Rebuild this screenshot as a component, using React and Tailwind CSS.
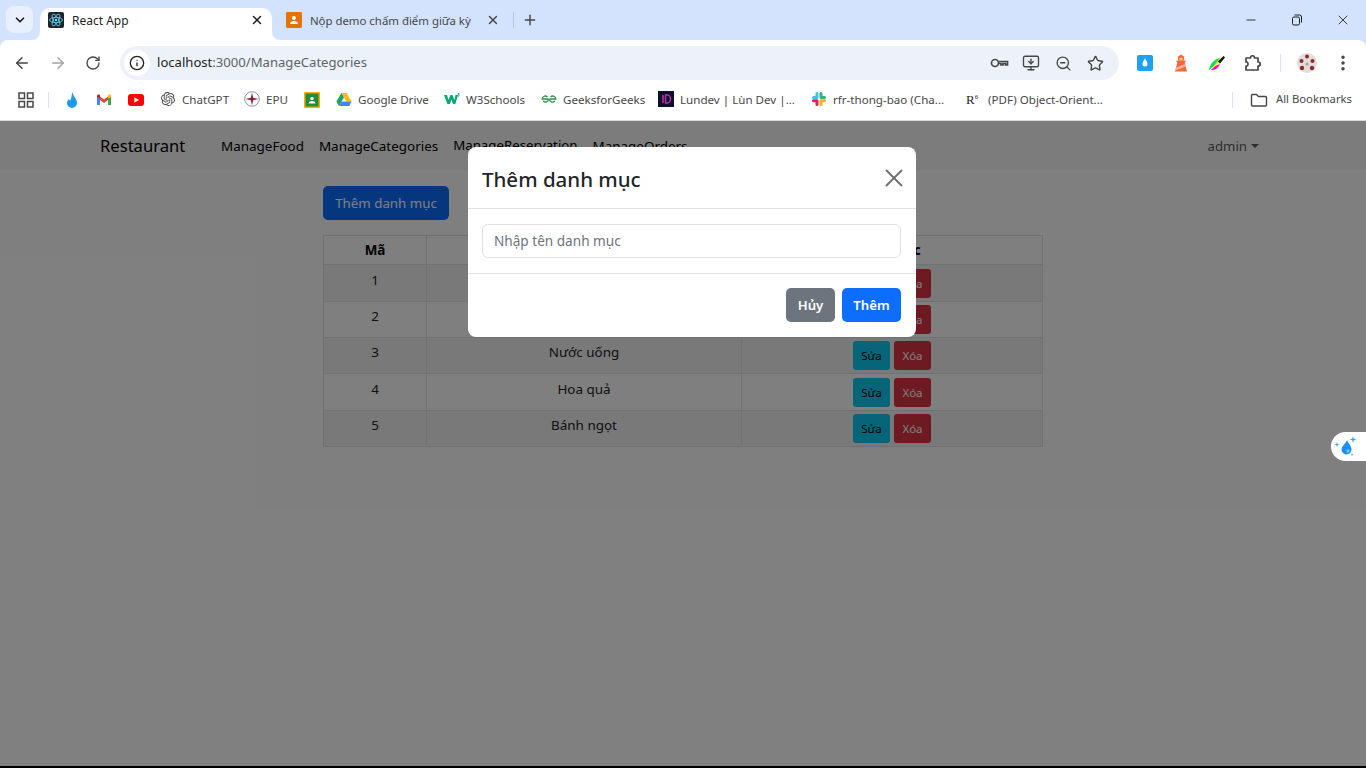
import React from 'react';
import { ArrowLeft, ArrowRight, ChevronDown, Info, Minus, MonitorDown, MoreVertical, Plus, RotateCw, Star, X, ZoomOut } from 'lucide-react';
import { SiOpenai } from 'react-icons/si';

// favicon và logo vẽ tay
const ReactIcon = () => (
  <svg width="16" height="16" viewBox="0 0 16 16">
    <rect width="16" height="16" rx="2" fill="#20232a" />
    <g fill="none" stroke="#61dafb" strokeWidth="0.8">
      <ellipse cx="8" cy="8" rx="6.5" ry="2.6" />
      <ellipse cx="8" cy="8" rx="6.5" ry="2.6" transform="rotate(60 8 8)" />
      <ellipse cx="8" cy="8" rx="6.5" ry="2.6" transform="rotate(120 8 8)" />
    </g>
    <circle cx="8" cy="8" r="1.3" fill="#61dafb" />
  </svg>
);

const ClassroomTab = () => (
  <svg width="16" height="16" viewBox="0 0 16 16">
    <rect width="16" height="16" rx="1.5" fill="#e37400" />
    <circle cx="8" cy="6" r="2" fill="#fff" />
    <path d="M4 12c0-2 2-3 4-3s4 1 4 3z" fill="#fff" />
  </svg>
);

const Drop = () => (
  <svg width="16" height="18" viewBox="0 0 16 18">
    <path d="M8.5 1C9 5 13 8 13 12a5 5 0 0 1-10 0c0-2 1-3 2-4 .3 1 .8 1.5 1.300 1.500C7.500 7 7.500 4 8.500 1z" fill="#1e9be8" />
  </svg>
);

const Gmail = () => (
  <svg width="16" height="16" viewBox="0 0 16 16">
    <path d="M1 13V4.500L4 6v7z" fill="#4285f4" />
    <path d="M12 13V6l3-1.500V13z" fill="#34a853" />
    <path d="M4 8V4.500L8 7.500l4-3V8L8 11z" fill="#ea4335" />
    <path d="M1 5V4c0-1.300 1.500-2 2.500-1.200L4 3.200V6.500z" fill="#c5221f" />
    <path d="M12 6.500V3.200l.5-.4C13.500 2 15 2.700 15 4v1z" fill="#fbbc04" />
  </svg>
);

const Youtube = () => (
  <svg width="16" height="12" viewBox="0 0 16 12">
    <rect width="16" height="12" rx="3" fill="#ff0000" />
    <path d="M6.300 3.300 11 6l-4.700 2.700z" fill="#fff" />
  </svg>
);

const Epu = () => (
  <svg width="16" height="16" viewBox="0 0 16 16">
    <circle cx="8" cy="8" r="7.300" fill="#fff" stroke="#8c8fb0" />
    <path d="M8 1.500 9.200 6.800 14.500 8 9.200 9.200 8 14.500 6.800 9.200 1.500 8 6.800 6.800z" fill="#a3202f" />
    <path d="M8 5.500 8.800 8 8 10.500 7.200 8z" fill="#2a2f7a" />
  </svg>
);

const ClassroomMark = () => (
  <svg width="16" height="16" viewBox="0 0 16 16">
    <rect width="16" height="16" rx="1" fill="#f9ab00" />
    <rect x="1.500" y="1.500" width="13" height="13" fill="#1e8e3e" />
    <circle cx="8" cy="6.500" r="1.800" fill="#fff" />
    <path d="M4.500 11.500c0-1.700 1.700-2.500 3.500-2.500s3.500.8 3.500 2.500z" fill="#fff" />
  </svg>
);

const Drive = () => (
  <svg width="16" height="15" viewBox="0 0 16 15">
    <path d="M5.400 1h5.200l5 8.500h-5.200z" fill="#fbbc04" />
    <path d="M5.400 1 .4 9.500 3 14l5-8.500z" fill="#1fa463" />
    <path d="M3 14h10.200l2.400-4.500H5.500z" fill="#4285f4" />
  </svg>
);

const W3 = () => (
  <svg width="16" height="14" viewBox="0 0 16 14">
    <path d="M0 3h3l1.500 5L6.500 3h2l2 5L11.500 3H14l-2.700 9H9L7.500 7.500 5.800 12H3.400z" fill="#04aa6d" />
    <path d="M13.500 1h2v.6l-1 1c.6 0 1 .4 1 .9s-.5 1-1.100 1h-.9V4h.9c.2 0 .3-.2.3-.4s-.2-.4-.5-.4h-.4v-.5l.9-1h-1.200z" fill="#04aa6d" />
  </svg>
);

const Gfg = () => (
  <svg width="16" height="10" viewBox="0 0 16 10" fill="none" stroke="#2f8d46" strokeWidth="1.300">
    <path d="M7.500 5H1.200a3 3 0 0 1 5.200-2M7.500 5a3 3 0 0 1-5.300 2" />
    <path d="M8.500 5h6.300a3 3 0 0 0-5.200-2M8.500 5a3 3 0 0 0 5.300 2" />
  </svg>
);

const Lundev = () => (
  <svg width="16" height="16" viewBox="0 0 16 16">
    <rect width="16" height="16" fill="#0d0f2e" />
    <path d="M5 4v8M7.500 4h1.500a3.500 4 0 0 1 0 8H7.500z" fill="none" stroke="#c0339f" strokeWidth="1.500" />
  </svg>
);

const Slack = () => (
  <svg width="16" height="16" viewBox="0 0 16 16" fill="none" strokeWidth="3" strokeLinecap="round">
    <path d="M6 2.500V6.500M2.500 6.500h3.500" stroke="#36c5f0" />
    <path d="M13.500 6.500H10M10 2.500v3.800" stroke="#2eb67d" />
    <path d="M10 13.500V9.800M13.500 9.800H10" stroke="#ecb22e" />
    <path d="M2.500 9.800H6M6 9.800v3.700" stroke="#e01e5a" />
  </svg>
);

const GridIcon = () => (
  <svg width="16" height="16" viewBox="0 0 16 16" fill="none" stroke="#474747" strokeWidth="1.500">
    <rect x="1" y="1" width="5.500" height="5.500" />
    <rect x="9.500" y="1" width="5.500" height="5.500" />
    <rect x="1" y="9.500" width="5.500" height="5.500" />
    <rect x="9.500" y="9.500" width="5.500" height="5.500" />
  </svg>
);

const FolderIcon = () => (
  <svg width="18" height="16" viewBox="0 0 18 16" fill="none" stroke="#474747" strokeWidth="1.400">
    <path d="M1.500 3.500c0-.6.400-1 1-1h4l2 2h7c.6 0 1 .4 1 1v7.500c0 .6-.4 1-1 1h-13c-.6 0-1-.4-1-1z" />
  </svg>
);

const KeyIcon = () => (
  <svg width="20" height="20" viewBox="0 0 20 20" fill="none" stroke="#474747" strokeWidth="1.700">
    <circle cx="6" cy="10" r="3.500" />
    <path d="M9.500 8.500h9V12h-2v-1.500H14V12h-2v-1.500H9.500" />
  </svg>
);

const PuzzleIcon = () => (
  <svg width="20" height="20" viewBox="0 0 20 20" fill="none" stroke="#474747" strokeWidth="1.700" strokeLinejoin="round">
    <path d="M3 5h4.500c0-3 4-3 4 0H15v4c3 0 3 4 0 4v4H3v-4c0 0 2 .5 2-2s-2-2-2-2z" />
  </svg>
);

const RestoreIcon = () => (
  <svg width="12" height="12" viewBox="0 0 12 12" fill="none" stroke="#1f1f1f" strokeWidth="1">
    <rect x="1.500" y="3" width="7" height="8" rx="1.500" />
    <path d="M3.500 1h5a2 2 0 0 1 2 2v5.500" />
  </svg>
);

const DropExt = () => (
  <svg width="16" height="16" viewBox="0 0 16 16">
    <rect width="16" height="16" rx="2" fill="#1da1f2" />
    <path d="M8 3c.5 2 2.500 3.500 2.500 6a2.500 2.500 0 0 1-5 0C5.500 6.500 7.500 5 8 3z" fill="#fff" />
  </svg>
);

const Lighthouse = () => (
  <svg width="18" height="18" viewBox="0 0 18 18">
    <path d="M5.500 8h7l2.500 9.500H3z" fill="#f4683c" />
    <path d="M4.300 13.500l9-3.500.6 2.500-10.400 4z" fill="#fbb19a" />
    <rect x="4.500" y="6.500" width="9" height="2" fill="#f4683c" />
    <rect x="6" y="3" width="6" height="3.500" fill="#f4683c" />
    <path d="M5.500 3 9 .5 12.500 3z" fill="#f4683c" />
    <rect x="7.500" y="3.800" width="3" height="2" fill="#fde293" />
  </svg>
);

const Feather = () => (
  <svg width="18" height="18" viewBox="0 0 18 18">
    <path d="M1 16C2 10 6 5 12 4L7 11z" fill="#00e050" />
    <path d="M3 16c4 0 7-1.500 9-6l-5 2z" fill="#ff00c8" />
    <path d="M4 14 12 4l1.500 2-7 7z" fill="#ffe600" />
    <path d="M10 7.500 15.500 2 17 3.500l-5 6z" fill="#111" />
  </svg>
);

const Avatar = () => (
  <svg width="20" height="20" viewBox="0 0 20 20">
    <circle cx="10" cy="10" r="10" fill="#e2dcda" />
    <circle cx="10" cy="3.500" r="2" fill="#8d2c2c" />
    <circle cx="4.500" cy="8" r="2" fill="#8d2c2c" />
    <circle cx="15.500" cy="8" r="2" fill="#8d2c2c" />
    <circle cx="5" cy="15" r="2.200" fill="#8d2c2c" />
    <circle cx="15" cy="15" r="2.200" fill="#8d2c2c" />
    <circle cx="10" cy="11" r="1.500" fill="#b09a96" />
  </svg>
);

const Sparkle = () => (
  <svg width="24" height="22" viewBox="0 0 24 22">
    <path d="M14 4c.8 3 4.500 5.500 4.500 9.500a5 5 0 0 1-10 0C8.500 10 13 7.500 14 4z" fill="#1e90f0" />
    <circle cx="15" cy="15" r="1.500" fill="#8cc8f5" />
    <path d="M20 0l.8 2.700 2.700.8-2.700.8-.8 2.700-.8-2.700-2.700-.8 2.700-.8zM4 6l.6 2 2 .6-2 .6-.6 2-.6-2-2-.6 2-.6zM19 17l.4 1.300 1.300.4-1.300.4-.4 1.300-.4-1.300-1.300-.4 1.300-.4z" fill="#3aa6f5" />
  </svg>
);

const bookmarks = [
  { icon: <Drop />, box: 'w-4' },
  { icon: <Gmail />, box: 'w-4' },
  { icon: <Youtube />, box: 'w-4' },
  { icon: <SiOpenai size={14} color="#474747" />, label: 'ChatGPT', box: 'w-[68px]' },
  { icon: <Epu />, label: 'EPU', box: 'w-[44px]' },
  { icon: <ClassroomMark />, box: 'w-4' },
  { icon: <Drive />, label: 'Google Drive', box: 'w-[92px]' },
  { icon: <W3 />, label: 'W3Schools', box: 'w-[81px]' },
  { icon: <Gfg />, label: 'GeeksforGeeks', box: 'w-[101px]' },
  { icon: <Lundev />, label: 'Lundev | Lùn Dev |...', box: 'w-[137px]' },
  { icon: <Slack />, label: 'rfr-thong-bao (Cha...', box: 'w-[139px]' },
];

// chiều cao hàng không đều nhau 1px như ảnh gốc
const rows = [
  { id: 1, name: '', h: 'h-[37px]', pad: 'pt-[5px]', btnPad: 'pt-[4px]' },
  { id: 2, name: '', h: 'h-[36px]', pad: 'pt-[4px]', btnPad: 'pt-[3px]' },
  { id: 3, name: 'Nước uống', h: 'h-[36px]', pad: 'pt-[4px]', btnPad: 'pt-[3px]' },
  { id: 4, name: 'Hoa quả', h: 'h-[37px]', pad: 'pt-[5px]', btnPad: 'pt-[4px]' },
  { id: 5, name: 'Bánh ngọt', h: 'h-[36px]', pad: 'pt-[4px]', btnPad: 'pt-[3px]' },
];

const TabStrip = () => (
  <div className="flex h-10 bg-[#d3e3fd] pl-[6px]">
    <div className="mt-[6px] flex h-[27px] w-[27px] items-center justify-center rounded-lg bg-[#e9f0fd]">
      <ChevronDown size={14} strokeWidth={3} color="#1f1f1f" />
    </div>
    <div className="relative ml-[7px] mt-2 flex h-8 w-[232px] items-center rounded-t-[10px] bg-white pb-2 pl-2 pr-2">
      <ReactIcon />
      <span className="ml-2 mt-px flex-1 text-[12px] text-[#1f1f1f]">React App</span>
      <X size={14} strokeWidth={2.5} color="#1f1f1f" />
      <svg className="absolute bottom-0 left-full" width="8" height="8" viewBox="0 0 8 8"><path d="M0 0v8h8a8 8 0 0 1-8-8z" fill="#fff" /></svg>
      <svg className="absolute bottom-0 right-full" width="8" height="8" viewBox="0 0 8 8"><path d="M8 0v8H0a8 8 0 0 0 8-8z" fill="#fff" /></svg>
    </div>
    <div className="mt-2 flex h-8 w-[241px] items-center pb-2 pl-[14px] pr-[13px]">
      <ClassroomTab />
      <span className="ml-2 mt-px w-[162px] whitespace-nowrap text-[11.400px] text-[#474747]">Nộp demo chấm điểm giữa kỳ</span>
      <X size={14} strokeWidth={2.5} color="#474747" className="ml-[15px]" />
    </div>
    <div className="mt-[12px] h-[16px] w-px bg-[#a8c7fa]" />
    <div className="ml-[8px] mt-[12px] flex h-4 w-4 items-center justify-center">
      <Plus size={16} strokeWidth={2.2} color="#474747" />
    </div>
    <div className="ml-auto flex h-10 items-center">
      <div className="flex w-[46px] justify-center"><Minus size={14} strokeWidth={1.5} color="#1f1f1f" /></div>
      <div className="flex w-[46px] justify-center"><RestoreIcon /></div>
      <div className="flex w-[46px] justify-center"><X size={16} strokeWidth={1.3} color="#1f1f1f" /></div>
    </div>
  </div>
);

const ToolBar = () => (
  <div className="bg-[#d3e3fd]">
    <div className="flex h-10 items-end rounded-t-[8px] bg-white pl-[13px]">
      <div className="flex h-[34px] items-center gap-[18px]">
        <ArrowLeft size={18} color="#474747" strokeWidth={2} />
        <ArrowRight size={18} color="#a3a3a3" strokeWidth={2} />
        <RotateCw size={16} color="#474747" strokeWidth={2} />
      </div>
      <div className="ml-[19px] flex h-[34px] w-[999px] items-center rounded-full bg-[#edf2fa] pl-[4px] pr-[14px]">
        <div className="flex h-[26px] w-[26px] items-center justify-center rounded-full bg-white">
          <Info size={16} color="#1f1f1f" strokeWidth={2} />
        </div>
        <span className="ml-[7px] flex-1 text-[13.100px] text-[#5f6368]"><span className="text-[#1f1f1f]">localhost</span>:3000/ManageCategories</span>
        <div className="flex items-center gap-[12px]">
          <KeyIcon />
          <div className="flex w-5 justify-center"><MonitorDown size={18} color="#474747" strokeWidth={1.8} /></div>
          <div className="flex w-5 justify-center"><ZoomOut size={17} color="#474747" strokeWidth={1.9} /></div>
          <div className="flex w-5 justify-center"><Star size={17} color="#474747" strokeWidth={2} /></div>
        </div>
      </div>
      <div className="ml-[8px] flex h-[34px] items-center">
        <div className="flex w-[36px] justify-center"><DropExt /></div>
        <div className="flex w-[36px] justify-center"><Lighthouse /></div>
        <div className="flex w-[36px] justify-center"><Feather /></div>
        <div className="flex w-[36px] justify-center"><PuzzleIcon /></div>
        <div className="ml-[9px] h-[18px] w-px bg-[#d3e3fd]" />
        <div className="ml-[16px]"><Avatar /></div>
        <div className="ml-[16px]"><MoreVertical size={20} color="#474747" strokeWidth={2.2} /></div>
      </div>
    </div>
  </div>
);

const BookmarkBar = () => (
  <div className="flex h-[41px] items-center border-b border-[#d5d7da] bg-white pb-px pl-[18px] text-[11.600px] text-[#474747]">
    <GridIcon />
    <div className="ml-[14px] h-[16px] w-px bg-[#d3e3fd]" />
    <div className="ml-[15px] flex items-center gap-4">
      {bookmarks.map((b, i) => (
        <div key={i} className={`flex items-center ${b.box}`}>
          <span className="flex w-4 shrink-0 justify-center">{b.icon}</span>
          {b.label && <span className="ml-[6px] whitespace-nowrap">{b.label}</span>}
        </div>
      ))}
      <div className="flex items-center">
        <span className="w-4 shrink-0 whitespace-nowrap font-['Liberation_Serif',serif] text-[13px] leading-none text-[#1f1f1f]">R<span className="align-super text-[7px] leading-none">6</span></span>
        <span className="ml-[6px] whitespace-nowrap">(PDF) Object-Orient...</span>
      </div>
    </div>
    <div className="ml-auto flex items-center pr-[14px]">
      <div className="mr-[17px] h-[16px] w-px bg-[#d3e3fd]" />
      <FolderIcon />
      <span className="ml-[8px] whitespace-nowrap text-[11.300px]">All Bookmarks</span>
    </div>
  </div>
);

const NavBar = () => (
  <nav className="flex h-[49px] items-center bg-[#f8f9fa] pl-[100px] pr-[107px] pt-px">
    <span className="w-[121px] text-[16.600px] text-black">Restaurant</span>
    <div className="flex gap-[15px] text-[13.450px] text-black">
      <span>ManageFood</span>
      <span>ManageCategories</span>
      <span className="text-[13.250px]">ManageReservation</span>
      <span>ManageOrders</span>
    </div>
    <div className="ml-auto mt-px flex items-center gap-[4px] text-[13.200px] text-[#595a5c]">
      admin
      <span className="h-0 w-0 border-x-[4px] border-t-[4px] border-x-transparent border-t-[#595a5c]" />
    </div>
  </nav>
);

const CategoryTable = () => (
  <table className="mt-[15px] w-full table-fixed border-collapse border border-[#dee2e6] text-center text-[13.450px] text-[#212529]">
    <thead>
      <tr className="h-[29px] font-bold text-black">
        <th className="w-[103px] border border-[#dee2e6] pt-px">Mã</th>
        <th className="w-[315px] border border-[#dee2e6]"></th>
        <th className="border border-[#dee2e6] pt-px">Thao tác</th>
      </tr>
    </thead>
    <tbody>
      {rows.map((row, i) => (
        <tr key={row.id} className={`${row.h} ${i % 2 === 0 ? 'bg-[#f2f2f2]' : 'bg-white'}`}>
          <td className={`border border-[#dee2e6] align-top ${row.pad}`}>{row.id}</td>
          <td className={`border border-[#dee2e6] align-top ${row.pad}`}>{row.name}</td>
          <td className={`border border-[#dee2e6] align-top ${row.btnPad}`}>
            <div className="flex justify-center gap-1 text-[11.500px]">
              <button className="h-[29px] w-[37px] rounded-[3px] bg-[#0dcaf0] text-black">Sửa</button>
              <button className="h-[29px] w-[37px] rounded-[3px] bg-[#dc3545] text-white">Xóa</button>
            </div>
          </td>
        </tr>
      ))}
    </tbody>
  </table>
);

const AddModal = () => (
  <div className="absolute inset-0 flex justify-center bg-black/50 pl-[18px] pt-[26px]">
    <div className="h-[190px] w-[448px] rounded-lg bg-white">
      <div className="flex h-[62px] items-center justify-between border-b border-[#dee2e6] px-[14px]">
        <span className="mt-[3px] text-[20.500px] font-medium text-[#212529]">Thêm danh mục</span>
        <X size={30} strokeWidth={1.500} color="#6f6f6f" className="-mr-[7px]" />
      </div>
      <div className="h-[65px] border-b border-[#dee2e6] px-[14px] pt-[15px]">
        <input
          placeholder="Nhập tên danh mục"
          className="h-[34px] w-[419px] rounded-[6px] border border-[#dee2e6] px-[11px] pb-[2px] text-[13.600px] placeholder:text-[#6c757d]"
        />
      </div>
      <div className="flex justify-end gap-[7px] px-[15px] pt-[14px] text-[13.200px] font-semibold text-white">
        <button className="h-[34px] w-[49px] rounded-[5px] bg-[#6c757d] pt-px">Hủy</button>
        <button className="h-[34px] w-[59px] rounded-[5px] bg-[#0d6efd] pt-px">Thêm</button>
      </div>
    </div>
  </div>
);

const App = () => (
  <div className="flex h-[768px] flex-col overflow-hidden bg-black font-['Noto_Sans',sans-serif]">
    <TabStrip />
    <ToolBar />
    <BookmarkBar />
    <div className="relative h-[645px] bg-white">
      <NavBar />
      <main className="mx-auto w-[720px] pt-4">
        <button className="h-[34px] w-[126px] rounded-[5px] bg-[#0d6efd] pt-px text-[13.300px] text-white">Thêm danh mục</button>
        <CategoryTable />
      </main>
      <AddModal />
      <div className="absolute right-0 top-[311px] flex h-[29px] w-[35px] items-center rounded-l-full bg-white pl-[2px]">
        <Sparkle />
      </div>
    </div>
  </div>
);

export default App;
